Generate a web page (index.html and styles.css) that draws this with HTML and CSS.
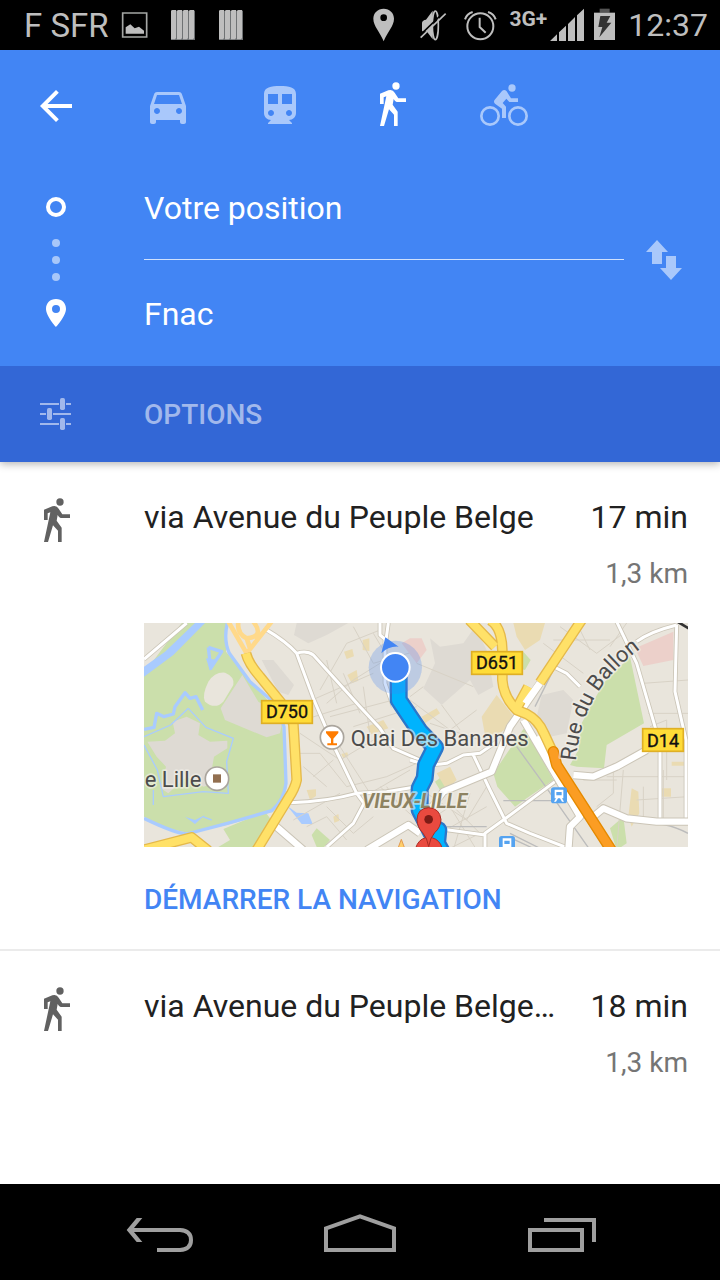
FILE: index.html
```
<!DOCTYPE html>
<html lang="fr">
<head>
    <meta charset="UTF-8">
    <meta name="viewport" content="width=device-width, initial-scale=1">
    <title>Itinéraire</title>
    <link rel="stylesheet" href="styles.css">
</head>
<body>
    <svg class="defs" aria-hidden="true">
        <symbol id="walk" viewBox="0 0 144 144">
            <circle cx="84" cy="12" r="11"/>
            <path d="M36 66V35L61 25Q74 21 80 32L91 49H114V60H86Q81 59 77 51L74 68L89 89V132H78V98L63 82L48 132H36L55 43L47 46V66Z"/>
        </symbol>
        <symbol id="bars" viewBox="0 0 144 150">
            <path fill="#6f7274" d="M36 32h72v88H36z"/>
            <path fill="#bebebe" d="M36 32l4-2h11v84l-3 4H36zM54 32l4-2h11v84l-3 4H54zM72 32l4-2h11v84l-3 4H72zM90 32l4-2h11v84l-3 4H90z"/>
        </symbol>
    </svg>

    <div class="status">
        <span class="carrier">F SFR</span>
        <svg class="status-icon" viewBox="0 0 144 150">
            <path fill="none" stroke="#a4a6a4" stroke-width="5" d="M35 39h72v72H35z"/>
            <path d="M44 101V82l14-9 13 12 13-5 15 12v9z"/>
        </svg>
        <svg class="status-icon"><use href="#bars"/></svg>
        <svg class="status-icon"><use href="#bars"/></svg>
        <span class="spacer"></span>
        <svg class="status-icon" viewBox="0 0 144 150">
            <path fill-rule="evenodd" d="M71 26c-18 0-31 13-31 30 0 22 20 40 31 68 11-28 31-46 31-68 0-17-13-30-31-30zm0 17a10 10 0 1 1 0 20 10 10 0 0 1 0-20z"/>
        </svg>
        <svg class="status-icon" viewBox="0 0 144 150">
            <path d="M42 68q2-8 12-9l20-27v86L56 94H42z"/>
            <ellipse cx="82" cy="76" rx="9" ry="43" fill="none" stroke="#bebebe" stroke-width="5"/>
            <path stroke="#000" stroke-width="5" d="M35 107l73-71"/>
            <path stroke="#bebebe" stroke-width="5" d="M38 113l75-72"/>
        </svg>
        <svg class="status-icon" viewBox="0 0 144 150">
            <g fill="none" stroke="#bebebe" stroke-width="6">
                <circle cx="73" cy="79" r="39"/>
                <path d="M71 53v28l18 17M27 58q5-16 23-22M119 58q-5-16-23-22"/>
            </g>
        </svg>
        <span class="network">3G+</span>
        <svg class="signal" viewBox="0 0 108 150">
            <path d="M3 123l21-20v20zM30 123V97l21-20v46zM57 123V72l21-21v72zM84 123V46l21-20v97z"/>
        </svg>
        <svg class="battery" viewBox="0 0 90 150">
            <path fill="#555" d="M29 26h30v12H29z"/>
            <path d="M12 38h63v82H12z"/>
            <path fill="#333" d="M31 48h30L50 68h14l-36 44 9-31H25z"/>
        </svg>
        <span class="clock">12:37</span>
    </div>

    <header class="header">
        <nav class="tabs">
            <button class="tab active" aria-label="Retour">
                <svg class="icon" viewBox="0 0 24 24"><path d="M20 11H7.8l5.6-5.6L12 4l-8 8 8 8 1.4-1.4L7.8 13H20z"/></svg>
            </button>
            <button class="tab" aria-label="Voiture">
                <svg class="icon" viewBox="0 0 24 24"><path d="M18.92 6.01C18.72 5.42 18.16 5 17.5 5h-11c-.66 0-1.21.42-1.42 1.01L3 12v8c0 .55.45 1 1 1h1c.55 0 1-.45 1-1v-1h12v1c0 .55.45 1 1 1h1c.55 0 1-.45 1-1v-8l-2.08-5.99zM6.5 16c-.83 0-1.5-.67-1.5-1.5S5.67 13 6.5 13s1.5.67 1.5 1.5S7.33 16 6.5 16zm11 0c-.83 0-1.5-.67-1.5-1.5s.67-1.5 1.5-1.5 1.5.67 1.5 1.5-.67 1.5-1.5 1.5zM5 11l1.5-4.5h11L19 11H5z"/></svg>
            </button>
            <button class="tab" aria-label="Transports en commun">
                <svg class="icon" viewBox="0 0 24 24"><path d="M12 2c-4.42 0-8 .5-8 4v9.5C4 17.43 5.57 19 7.5 19L6 20.5v.5h12v-.5L16.5 19c1.93 0 3.5-1.57 3.5-3.5V6c0-3.5-3.58-4-8-4zM7.5 17c-.83 0-1.5-.67-1.5-1.5S6.67 14 7.5 14s1.5.67 1.5 1.5S8.33 17 7.5 17zm3.5-6H6V6h5v5zm5.5 6c-.83 0-1.5-.67-1.5-1.5s.67-1.5 1.5-1.5 1.5.67 1.5 1.5-.67 1.5-1.5 1.5zm1.5-6h-5V6h5v5z"/></svg>
            </button>
            <button class="tab active" aria-label="À pied">
                <svg class="icon"><use href="#walk"/></svg>
            </button>
            <button class="tab" aria-label="Vélo">
                <svg class="icon" viewBox="0 0 144 144">
                    <circle cx="96" cy="18" r="11"/>
                    <path d="M43 55L66 27Q73 21 80 28L93 49H114V60H88L79 50L68 63L78 74V108H66V80L46 66Q40 61 43 55Z"/>
                    <circle class="wheel" cx="30" cy="102" r="26"/>
                    <circle class="wheel" cx="114" cy="102" r="26"/>
                </svg>
            </button>
        </nav>

        <div class="trip">
            <svg class="rail" viewBox="0 0 48 204">
                <circle cx="24" cy="45" r="8" fill="none" stroke="#fff" stroke-width="4"/>
                <g opacity=".54"><circle cx="24" cy="81" r="4"/><circle cx="24" cy="98" r="4"/><circle cx="24" cy="115" r="4"/></g>
                <path fill-rule="evenodd" d="M24 137c-6 0-10 4-10 10 0 7 10 18 10 18s10-11 10-18c0-6-4-10-10-10zm0 6a4 4 0 1 1 0 8 4 4 0 0 1 0-8z"/>
            </svg>
            <div class="fields">
                <input class="field from" type="text" aria-label="Départ" value="Votre position">
                <input class="field to" type="text" aria-label="Arrivée" value="Fnac">
            </div>
            <button class="swap" aria-label="Inverser">
                <svg class="icon" viewBox="0 0 144 144"><path d="M51 12L84 48H66V84H36V48H18ZM93 132L60 96H78V60H108V96H126Z"/></svg>
            </button>
        </div>

        <button class="options">
            <svg class="icon" viewBox="0 0 144 144">
                <path d="M24 39h57v6H24zM102 39h15v6h-15zM24 69h18v6H24zM63 69h54v6H63zM24 99h57v6H24zM102 99h15v6h-15z"/>
                <rect x="84" y="24" width="15" height="36" rx="5"/>
                <rect x="45" y="54" width="15" height="36" rx="5"/>
                <rect x="84" y="84" width="15" height="36" rx="5"/>
            </svg>
            OPTIONS
        </button>
    </header>

    <main class="routes">
        <article class="route">
            <svg class="icon"><use href="#walk"/></svg>
            <div class="route-body">
                <div class="route-title">
                    <h2 class="via">via Avenue du Peuple Belge</h2>
                    <span class="time">17 min</span>
                </div>
                <p class="distance">1,3 km</p>
                <svg class="map" viewBox="0 0 1632 672" role="img" aria-label="Carte">
                    <path fill="#e9e5dc" d="M0 0h1632v672H0z"/>

                    <!-- citadelle et parc -->
                    <g transform="translate(-12 -9)">
                        <path class="green" d="M125 9H258V95L425 290L440 505L400 575L260 615L150 640L80 625L12 590V160Z"/>
                        <path fill="#e9e5dc" d="M12 9H125L12 115Z"/>
                        <path class="green" d="M250 627L375 575L410 620L365 681H235L270 660Z"/>
                        <path class="green" d="M530 625L570 660L552 681H530L515 645Z"/>
                        <path class="built" d="M307 165L355 245L430 290L420 340L380 352L255 300L242 265Z"/>
                        <path class="built" d="M22 365L75 362L105 340L98 305L140 290L180 310L175 345L210 365L262 362L262 385L222 410L215 450L228 490L190 500L140 470L85 520L62 505L78 440L50 410Z"/>
                        <path class="built" d="M470 9H625L560 45L505 70L462 45ZM365 120H400L462 195L445 225L415 215Z"/>
                        <path fill="#e9e5dc" d="M205 185Q225 155 255 158Q285 170 280 195L250 245Q225 270 195 245Q185 225 205 185Z"/>
                        <path class="water" d="M12 140L75 95L165 9H195L100 105L12 170Z"/>
                        <path class="water line" d="M262 9Q250 60 268 100L330 185L410 255L432 320L438 490Q432 540 395 572L262 610L140 642Q105 640 12 595"/>
                        <path class="water line" d="M12 328L42 322L50 280L72 290L100 282L105 260L135 218L150 235L168 230L188 270M205 82L245 95L212 145L205 82"/>
                        <path class="water" d="M442 558L470 578L505 580L518 612L485 612ZM198 115L232 120L210 152ZM135 590L165 600L195 585L165 612Z"/>
                        <path class="water thin" d="M145 265L198 322L280 355L260 425L265 520L190 515L70 530L52 450L12 375M145 265L92 315L12 350M188 590L215 600M40 510V555"/>
                        <path class="sand" d="M612 95l25-8 5 22-22 8zM622 165l28-15 5 32-20 8zM668 60l20-5v38l-20-3zM500 510l28-2v20l-18 12zM580 590l15-8 3 20-15 6zM604 402l18-5 3 12-15 6zM680 320l50-20 15 25-50 18z"/>
                        <path class="street" d="M470 260L700 160M490 300L650 250M560 250L640 180L720 130M540 210L620 70L720 30M590 250L560 120M660 280L610 160M570 290L760 240M640 320L830 260M690 345L670 200M480 340L600 420L700 360L790 400M480 400H540L620 500L740 470L830 430M490 440L560 500M520 470L580 420M600 380L690 520L810 450M460 600L600 520M560 560L640 640L700 590M500 620L560 590L620 660M720 500L830 600M700 40L790 190M640 20L700 130L840 90M740 500L790 570"/>
                        <path class="casing" d="M12 118L140 9M372 25Q440 65 470 100L520 235L580 375L650 520L672 550L640 610L560 681M470 100Q500 90 520 105L660 260L720 325L760 385L840 420M450 548Q560 545 650 520M650 520L740 515L830 500M720 9V45L738 60L745 9M735 60V190L760 260"/>
                        <path class="road" d="M12 118L140 9M372 25Q440 65 470 100L520 235L580 375L650 520L672 550L640 610L560 681M470 100Q500 90 520 105L660 260L720 325L760 385L840 420M450 548Q560 545 650 520M650 520L740 515L830 500M720 9V45L738 60L745 9M735 60V190L760 260"/>
                        <path class="casing wide" d="M400 612L490 690M680 690L805 615L840 640"/>
                        <path class="road wide" d="M400 612L490 690M680 690L805 615L840 640"/>
                        <path class="ramp" d="M265 5L320 100L395 5M295 5Q290 40 320 55Q375 50 340 5M320 55L330 85"/>
                        <path class="major-edge" d="M318 100Q325 130 360 170L425 250L460 310L470 480Q465 505 445 535L350 690M0 692L155 652L205 692"/>
                        <path class="major" d="M318 100Q325 130 360 170L425 250L460 310L470 480Q465 505 445 535L350 690M0 692L155 652L205 692"/>
                    </g>

                    <g transform="translate(798 -9)">
                        <path fill="#ecd0ca" d="M675 85L790 35V120L700 138ZM0 55H35L50 90L20 130L-25 70Z"/>
                        <path class="green" d="M480 435L505 390L515 310L580 190L660 110L702 310L590 375L582 445L500 440ZM340 95L362 120L345 150L325 145ZM250 460L345 320L430 480L350 535L315 560L262 500ZM600 625L640 590L650 670L620 690ZM75 485L95 470L110 500L90 510Z"/>
                        <path class="built" d="M60 55L90 80L160 70L195 20L230 90L250 200L205 225L180 180L95 255L40 205L75 130ZM395 225L460 210L490 240L470 340L420 350L380 290Z"/>
                        <path class="sand" d="M310 9H405L390 60L345 90L320 50ZM215 290L260 225L320 300L270 340L225 345ZM80 460L120 440L140 480L110 510ZM655 590L665 505L685 515L688 580L665 620ZM755 505h28v25h-28zM785 425h38v12h-38zM35 290L80 265L90 280L45 310Z"/>
                        <path class="street" d="M20 130L190 200M0 240L120 330L200 270M60 310L210 360M95 255L150 330M40 200L0 230M400 70L520 160M430 60L600 60M450 20L560 100L640 40M500 9L540 90M600 80L650 9M700 190L834 180M715 280H834M720 320L770 300V480M610 430V520L560 560M640 450L620 690M590 470H834M520 480L620 480M700 500V600M760 450V600M680 540L834 530M130 560L210 640L110 690M90 640L230 560M130 690L180 520M20 500L170 600L230 500M60 600L120 560L200 690"/>
                        <path class="rail-line" d="M320 380L400 490L540 690M280 542H440M110 620H230M650 605Q760 600 834 640M300 640L400 690M305 655L380 690M375 260L440 130"/>
                        <path class="casing" d="M620 5L680 130L735 320L750 385V600M800 15L795 215L828 360V600M800 15Q720 35 680 65M430 140L470 160L510 200M0 420Q60 440 110 430L160 405L210 400L260 365M190 405L240 510L290 610L360 640L465 681M435 485L280 600L225 640V690M100 628L225 645"/>
                        <path class="road" d="M620 5L680 130L735 320L750 385V600M800 15L795 215L828 360V600M800 15Q720 35 680 65M430 140L470 160L510 200M0 420Q60 440 110 430L160 405L210 400L260 365M190 405L240 510L290 610L360 640L465 681M435 485L280 600L225 640V690M100 628L225 645"/>
                        <path class="casing wide" d="M390 190L300 320L245 455L100 515L60 570M340 300L510 590L480 620L475 690M380 350L600 690M490 465L550 470L620 440L710 390M550 590L580 565L650 595L740 605H834"/>
                        <path class="road wide" d="M390 190L300 320L245 455L100 515L60 570M340 300L510 590L480 620L475 690M380 350L600 690M490 465L550 470L620 440L710 390M550 590L580 565L650 595L740 605H834"/>
                        <path class="major-edge" d="M515 0L390 188M178 0L255 80M240 0Q275 20 277 90V180Q280 230 320 270L350 282Q385 300 402 340L430 400M355 200L320 265"/>
                        <path class="major" d="M515 0L390 188M178 0L255 80M240 0Q275 20 277 90V180Q280 230 320 270L350 282Q385 300 402 340L430 400M355 200L320 265"/>
                        <path stroke="#fff" stroke-width="18" d="M388 190L345 250"/>
                        <path class="highway edge" d="M430 395L440 435L610 700"/>
                        <path class="highway" d="M430 395L440 435L610 700"/>
                        <path stroke="#333" stroke-width="8" d="M802 5L836 25"/>
                        <g fill="#55a3f0">
                            <rect x="423" y="502" width="48" height="48" rx="8"/>
                            <rect x="267" y="648" width="48" height="48" rx="8"/>
                        </g>
                        <path fill="#fff" fill-rule="evenodd" d="M434 509h26v26h-26zM439 516v10h16v-10zM438 535h6l-6 10h-6zM450 535h6l6 10h-6zM278 655h26v26h-26zM283 662v10h16v-10z"/>
                    </g>

                    <!-- trajet -->
                    <g transform="translate(648 21)">
                        <path class="path-edge" d="M116 140V210L180 305L225 352L198 405L194 445L179 475V540L215 610L235 600L231 640L245 665"/>
                        <path class="path" d="M116 140V210L180 305L225 352L198 405L194 445L179 475V540L215 610L235 600L231 640L245 665"/>
                        <circle cx="106" cy="112" r="80" fill="#4285f4" fill-opacity=".26"/>
                        <path fill="#4285f4" d="M76 22L116 50Q85 48 64 70Z"/>
                        <circle cx="106" cy="112" r="43" fill="#4285f4" stroke="#fff" stroke-width="6"/>
                        <path fill="#ffcf6b" stroke="#e39b50" stroke-width="3" d="M112 660L124 628L136 660Z"/>
                    </g>

                    <text class="place" x="2" y="493">e Lille</text>
                    <text class="place" x="620" y="368">Quai Des Bananes</text>
                    <path id="ballon" fill="none" d="M1296 414Q1306 280 1378 185Q1432 110 1560 30"/>
                    <text class="place"><textPath href="#ballon">Rue du Ballon</textPath></text>
                    <text class="district" x="654" y="555">VIEUX-LILLE</text>

                    <g class="poi">
                        <circle cx="219" cy="467" r="35"/>
                        <circle cx="564" cy="343" r="35"/>
                    </g>
                    <path fill="#926f50" d="M207 454h24v25h-24z"/>
                    <path fill="#ff7c00" d="M546 325h37v5l-15 17v14h11v6h-29v-6h11v-14l-15-17z"/>

                    <g transform="translate(648 21)">
                        <path class="pin" d="M162 700Q160 624 206 622Q254 624 252 700Z"/>
                        <path class="pin" d="M206 533Q172 535 171 569Q172 592 188 608Q202 624 206 650Q210 624 224 608Q242 592 243 569Q240 535 206 533Z"/>
                        <circle cx="206" cy="568" r="13" fill="#7d1c16"/>
                    </g>

                    <g class="shield">
                        <rect x="353" y="233" width="152" height="68"/>
                        <rect x="983" y="86" width="152" height="68"/>
                        <rect x="1496" y="317" width="122" height="68"/>
                    </g>
                    <g class="shield-text">
                        <text x="429" y="286">D750</text>
                        <text x="1059" y="139">D651</text>
                        <text x="1557" y="371">D14</text>
                    </g>
                </svg>
                <button class="start">DÉMARRER LA NAVIGATION</button>
            </div>
        </article>

        <article class="route">
            <svg class="icon"><use href="#walk"/></svg>
            <div class="route-body">
                <div class="route-title">
                    <h2 class="via">via Avenue du Peuple Belge…</h2>
                    <span class="time">18 min</span>
                </div>
                <p class="distance">1,3 km</p>
            </div>
        </article>
    </main>

    <footer class="navbar">
        <button class="nav-button" aria-label="Précédent">
            <svg class="nav-icon" viewBox="0 0 240 288"><path d="M34 138H180Q213 140 213 168Q213 196 180 198H111"/><path class="filled" d="M50 102H67L37 138L67 174H50L20 138Z"/></svg>
        </button>
        <button class="nav-button" aria-label="Accueil">
            <svg class="nav-icon" viewBox="0 0 240 288"><path d="M18 198V133L120 97L222 133V198Z"/></svg>
        </button>
        <button class="nav-button" aria-label="Applications récentes">
            <svg class="nav-icon" viewBox="0 0 240 288"><path d="M30 138H186V198H30ZM72 108H222V174"/></svg>
        </button>
    </footer>
</body>
</html>
```
FILE: styles.css
```
* {
    box-sizing: border-box;
}

body {
    margin: 0;
    min-height: 100vh;
    display: flex;
    flex-direction: column;
    background: #fff;
    color: #212121;
    font-family: Roboto, "Liberation Sans", sans-serif;
    font-size: 32px;
}

button {
    padding: 0;
    border: 0;
    background: none;
    font-family: inherit;
}

svg {
    display: block;
    flex-shrink: 0;
}

.defs {
    position: absolute;
    width: 0;
    height: 0;
}

.icon {
    width: 48px;
    height: 48px;
    fill: currentColor;
}

/* status bar */
.status {
    display: flex;
    align-items: center;
    height: 50px;
    padding: 0 12px 0 24px;
    background: #000;
    color: #bebebe;
    fill: #bebebe;
}

.carrier {
    width: 87px;
    font-size: 33px;
    white-space: nowrap;
}

.status-icon {
    width: 48px;
    height: 50px;
}

.spacer {
    flex: 1;
}

.network {
    align-self: flex-start;
    margin: 6px 2px 0 6px;
    font-size: 21px;
    line-height: 26px;
    font-weight: bold;
}

.signal {
    width: 36px;
    height: 50px;
}

.battery {
    width: 30px;
    height: 50px;
    margin: 0 8px 0 5px;
}

/* header */
.header {
    background: #4285f4;
    color: #fff;
    box-shadow: 0 2px 8px rgba(0, 0, 0, 0.3);
}

.tabs {
    display: flex;
}

.tab {
    display: flex;
    align-items: center;
    justify-content: center;
    width: 112px;
    height: 112px;
    color: #a9c8fb;
}

.tab.active {
    color: #fff;
}

.wheel {
    fill: none;
    stroke: currentColor;
    stroke-width: 8;
}

.trip {
    display: flex;
    align-items: center;
    padding-right: 16px;
}

.rail {
    width: 48px;
    height: 204px;
    margin: 0 64px 0 32px;
    fill: #fff;
}

.fields {
    flex: 1;
    min-width: 0;
}

.field {
    display: block;
    width: 100%;
    border: 0;
    padding: 0;
    background: none;
    color: #fff;
    font-family: inherit;
    font-size: 32px;
}

.from {
    height: 98px;
    padding-bottom: 5px;
    border-bottom: 1px solid #d0e1fd;
}

.to {
    height: 106px;
    padding-top: 2px;
}

.swap {
    display: flex;
    justify-content: center;
    align-items: center;
    width: 80px;
    height: 80px;
    margin-bottom: 8px;
    color: #a9c8fb;
}

.options {
    display: flex;
    align-items: center;
    gap: 64px;
    width: 100%;
    height: 96px;
    padding: 0 32px;
    background: #3367d6;
    color: #a1b8ec;
    font-size: 28px;
    font-weight: 500;
}

/* routes */
.routes {
    flex: 1;
}

.route {
    display: flex;
    gap: 64px;
    padding: 36px 32px 0;
    border-bottom: 2px solid #ebebeb;
}

.route:last-child {
    border-bottom: 0;
}

.route > .icon {
    color: #616161;
}

.route-body {
    flex: 1;
    min-width: 0;
}

.route-title {
    display: flex;
    justify-content: space-between;
    line-height: 38px;
    white-space: nowrap;
}

.via {
    margin: 0;
    font-size: 32px;
    font-weight: normal;
}

.distance {
    margin: 20px 0 31px;
    color: #757575;
    font-size: 28px;
    line-height: 36px;
    text-align: right;
}

.start {
    display: block;
    height: 102px;
    padding-top: 2px;
    color: #4285f4;
    font-size: 28px;
    font-weight: 500;
}

/* map */
.map {
    width: 100%;
    height: auto;
}

.map path {
    stroke-linejoin: round;
}

.green {
    fill: #cbdfab;
}

.built {
    fill: #dedad3;
}

.sand {
    fill: #eadbb2;
}

.water {
    fill: #a9cbff;
}

.water.line,
.water.thin {
    fill: none;
    stroke: #a9cbff;
    stroke-width: 10;
}

.water.thin {
    stroke-width: 4;
}

.street,
.rail-line,
.casing,
.road,
.ramp,
.major,
.major-edge,
.highway,
.path,
.path-edge {
    fill: none;
}

.street {
    stroke: #d8d2c6;
    stroke-width: 3;
}

.rail-line {
    stroke: #bcbcbc;
    stroke-width: 4;
}

.casing {
    stroke: #cbc5b7;
    stroke-width: 14;
}

.road {
    stroke: #fff;
    stroke-width: 9;
}

.casing.wide {
    stroke-width: 25;
}

.road.wide {
    stroke-width: 19;
}

.ramp {
    stroke: #ffd98a;
    stroke-width: 14;
}

.major-edge {
    stroke: #e5b94a;
    stroke-width: 32;
}

.major {
    stroke: #ffe168;
    stroke-width: 24;
}

.highway {
    stroke: #fb9d23;
    stroke-width: 26;
    stroke-linecap: round;
}

.highway.edge {
    stroke: #e58a00;
    stroke-width: 34;
}

.path-edge {
    stroke: #2b76c9;
    stroke-width: 54;
}

.path {
    stroke: #00b3fd;
    stroke-width: 40;
}

.pin {
    fill: #e94a3f;
    stroke: #a92c24;
    stroke-width: 3;
}

.poi {
    fill: #fff;
    stroke: #aaa59d;
    stroke-width: 5;
}

.place,
.district {
    stroke: #f3f0ea;
    stroke-opacity: 0.6;
    stroke-width: 10;
    stroke-linejoin: round;
    paint-order: stroke;
}

.place {
    fill: #4c4c4c;
    font-size: 66px;
}

.district {
    fill: #8d8261;
    font-size: 58px;
    font-weight: bold;
    font-style: italic;
}

.shield {
    fill: #ffdc37;
    stroke: #dfaf25;
    stroke-width: 5;
}

.shield-text {
    font-size: 54px;
    text-anchor: middle;
    fill: #111;
    stroke: #111;
    stroke-width: 1;
}

/* navigation bar */
.navbar {
    display: flex;
    padding: 0 60px;
    background: #000;
}

.nav-button {
    flex: 1;
    display: flex;
    justify-content: center;
}

.nav-icon {
    width: 80px;
    height: 96px;
    fill: none;
    stroke: #9f9f9f;
    stroke-width: 12;
}

.filled {
    fill: #9f9f9f;
    stroke: none;
}
```
